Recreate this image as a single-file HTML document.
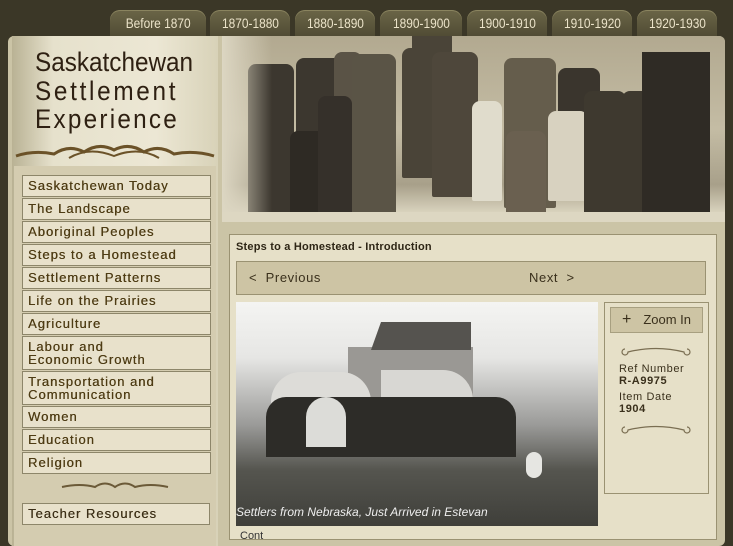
<!DOCTYPE html>
<html><head><meta charset="utf-8"><style>
*{margin:0;padding:0;box-sizing:border-box}
body{width:733px;height:538px;overflow:hidden;background:#3b3727;font-family:"Liberation Sans",sans-serif;position:relative}
.tab{position:absolute;top:10px;height:28px;border-radius:10px 10px 0 0;background:linear-gradient(#6b6547,#4f4a33);color:#ebe3c9;font-size:14px;text-align:center;line-height:26px;box-shadow:inset 0 1px 0 #8a845f}
.tab span{display:inline-block;transform:scaleX(0.85)}
.main{position:absolute;left:8px;top:36px;width:717px;height:510px;background:#cbc4a6;border-radius:6px}
.left{position:absolute;left:12px;top:36px;width:206px;height:510px;background:linear-gradient(90deg,#b9b294,#e6e1cc 20%,#ece7d4 70%,#d8d2b8)}
.title{position:absolute;left:35px;top:48px;color:#2e2012;font-family:"Liberation Sans",sans-serif;font-size:27px;line-height:28.5px;transform:scaleX(0.9);transform-origin:left}
.menubg{position:absolute;left:14px;top:166px;width:202px;height:380px;background:#d4ccb0}
.m{position:absolute;left:22px;width:189px;height:22px;background:#e8e1cb;border:1px solid #8d866a;color:#4e3c14;font-size:13px;letter-spacing:1px;padding-left:5px;line-height:20px;white-space:nowrap;text-shadow:0.3px 0 0 #4e3c14}
.m.two{line-height:13px;padding-top:3px}
.photo{position:absolute;left:222px;top:36px;width:503px;height:186px;background:linear-gradient(180deg,#b2a990 0%,#c4bca4 50%,#a8a08a 80%,#ddd7c2 96%);overflow:hidden;border-radius:0 6px 0 0}
.fig{position:absolute;background:#3c372f;border-radius:8px 8px 2px 2px}
.content{position:absolute;left:229px;top:234px;width:488px;height:306px;background:#e6e0c8;border:1px solid #9a9272}
.nav{position:absolute;left:236px;top:261px;width:470px;height:34px;background:#cdc4a4;border:1px solid #9a9272;color:#3a301c;font-size:13px;letter-spacing:0.6px}
.img{position:absolute;left:236px;top:302px;width:362px;height:224px;background:linear-gradient(180deg,#f4f4f2 0%,#e6e6e4 25%,#9a9a98 55%,#55554f 75%,#3f3f3a 100%);overflow:hidden}
.side{position:absolute;left:604px;top:302px;width:105px;height:192px;border:1px solid #9a9272}
.zoom{position:absolute;left:610px;top:307px;width:93px;height:26px;background:#cdc4a4;border:1px solid #a79f80;color:#3a301c;font-size:13px;line-height:24px}
.swirl{position:absolute;left:619px;width:74px;height:12px}
.lbl{position:absolute;left:619px;font-size:11px;color:#3a301c;letter-spacing:0.6px}
</style></head><body>
<div class="tab" style="left:110px;width:96px"><span>Before 1870</span></div>
<div class="tab" style="left:210px;width:80px"><span>1870-1880</span></div>
<div class="tab" style="left:295px;width:80px"><span>1880-1890</span></div>
<div class="tab" style="left:380px;width:82px"><span>1890-1900</span></div>
<div class="tab" style="left:467px;width:80px"><span>1900-1910</span></div>
<div class="tab" style="left:552px;width:80px"><span>1910-1920</span></div>
<div class="tab" style="left:637px;width:80px"><span>1920-1930</span></div>
<div class="main"></div>
<div class="left"></div>
<div class="title">Saskatchewan<br><span style="letter-spacing:3px">Settlement</span><br><span style="letter-spacing:2.5px">Experience</span></div>
<div class="menubg"></div>
<svg style="position:absolute;left:14px;top:142px" width="202" height="24"><path d="M2 14 Q20 8 40 12 Q55 2 70 10 Q85 0 100 8 Q115 0 130 10 Q145 2 160 12 Q180 8 200 14" stroke="#6b5228" stroke-width="3" fill="none"/><path d="M55 16 Q75 4 100 14 Q125 4 145 16" stroke="#6b5228" stroke-width="2" fill="none"/></svg>
<div class="m" style="top:175px">Saskatchewan Today</div>
<div class="m" style="top:198px">The Landscape</div>
<div class="m" style="top:221px">Aboriginal Peoples</div>
<div class="m" style="top:244px">Steps to a Homestead</div>
<div class="m" style="top:267px">Settlement Patterns</div>
<div class="m" style="top:290px">Life on the Prairies</div>
<div class="m" style="top:313px">Agriculture</div>
<div class="m two" style="top:336px;height:34px">Labour and<br>Economic Growth</div>
<div class="m two" style="top:371px;height:34px">Transportation and<br>Communication</div>
<div class="m" style="top:406px">Women</div>
<div class="m" style="top:429px">Education</div>
<div class="m" style="top:452px">Religion</div>
<svg style="position:absolute;left:60px;top:480px" width="110" height="14"><path d="M2 7 Q20 3 35 7 Q45 0 55 7 Q65 0 75 7 Q90 3 108 7" stroke="#6b5a38" stroke-width="2" fill="none"/></svg>
<div class="m" style="top:503px;width:188px;color:#3a2e18">Teacher Resources</div>
<div class="photo">
<div class="fig" style="left:190px;top:0;width:40px;height:90px;background:#4a4438;border-radius:0"></div>
<div class="fig" style="left:26px;top:28px;width:46px;height:150px"></div>
<div class="fig" style="left:74px;top:22px;width:46px;height:150px"></div>
<div class="fig" style="left:112px;top:16px;width:28px;height:70px;background:#5a5346"></div>
<div class="fig" style="left:68px;top:95px;width:36px;height:85px;background:#2e2a24"></div>
<div class="fig" style="left:96px;top:60px;width:34px;height:120px;background:#35302a"></div>
<div class="fig" style="left:130px;top:18px;width:44px;height:160px;background:#5a5446"></div>
<div class="fig" style="left:180px;top:12px;width:42px;height:130px;background:#4a4438"></div>
<div class="fig" style="left:210px;top:16px;width:46px;height:145px;background:#4e473b"></div>
<div class="fig" style="left:250px;top:65px;width:30px;height:100px;background:#e0dccc"></div>
<div class="fig" style="left:282px;top:22px;width:52px;height:150px;background:#655d4c"></div>
<div class="fig" style="left:336px;top:32px;width:42px;height:110px;background:#3a352d"></div>
<div class="fig" style="left:326px;top:75px;width:40px;height:90px;background:#d8d2c0"></div>
<div class="fig" style="left:284px;top:95px;width:40px;height:85px;background:#6a6050"></div>
<div class="fig" style="left:362px;top:55px;width:42px;height:125px;background:#3e392f"></div>
<div class="fig" style="left:400px;top:55px;width:42px;height:125px;background:#3e392f"></div>
<div class="fig" style="left:420px;top:75px;width:40px;height:100px;background:#4a4438"></div>
<div class="fig" style="left:420px;top:16px;width:68px;height:160px;background:#2f2b25;border-radius:0;z-index:-0"></div>
<div style="position:absolute;left:0;top:0;width:50px;height:186px;background:linear-gradient(90deg,#dcd6c2,rgba(200,196,180,0))"></div>
<div style="position:absolute;left:0;top:176px;width:503px;height:10px;background:#ddd7c2"></div>
</div>
<div class="content"></div>
<div style="position:absolute;left:236px;top:241px;font-size:11px;font-weight:bold;color:#2e2616;letter-spacing:0.2px">Steps to a Homestead - Introduction</div>
<div class="nav"><span style="position:absolute;left:12px;top:8px">&lt;&nbsp; Previous</span><span style="position:absolute;left:292px;top:8px">Next &nbsp;&gt;</span></div>
<div class="img">
<div style="position:absolute;left:112px;top:45px;width:125px;height:70px;background:#9a9894"></div>
<div style="position:absolute;left:135px;top:20px;width:100px;height:28px;background:#55534f;clip-path:polygon(10% 0,100% 0,100% 100%,0 100%)"></div>
<div style="position:absolute;left:35px;top:70px;width:100px;height:45px;background:#dddcd8;border-radius:30px 30px 0 0"></div>
<div style="position:absolute;left:145px;top:68px;width:92px;height:45px;background:#d8d7d3;border-radius:0 30px 0 0"></div>
<div style="position:absolute;left:30px;top:95px;width:250px;height:60px;background:#2d2c28;border-radius:20px 20px 0 0"></div>
<div style="position:absolute;left:70px;top:95px;width:40px;height:50px;background:#dcdcd8;border-radius:20px 20px 0 0"></div>
<div style="position:absolute;left:290px;top:150px;width:16px;height:26px;background:#e6e6e2;border-radius:8px"></div>
<div style="position:absolute;left:0;top:203px;width:362px;height:21px;color:#eee;font-style:italic;font-size:12px">Settlers from Nebraska, Just Arrived in Estevan</div>
</div>
<div class="side"></div>
<div class="zoom"><span style="margin-left:11px;font-size:16px">+</span><span style="margin-left:12px">Zoom In</span></div>
<svg class="swirl" style="top:345px"><path d="M6 4 a3 3 0 1 0 3 3 Q37 0 65 7 a3 3 0 1 0 3 -3" stroke="#7a6e52" stroke-width="1.2" fill="none"/></svg>
<div class="lbl" style="top:363px">Ref Number</div>
<div class="lbl" style="top:375px;font-weight:bold">R-A9975</div>
<div class="lbl" style="top:391px">Item Date</div>
<div class="lbl" style="top:403px;font-weight:bold">1904</div>
<svg class="swirl" style="top:423px"><path d="M6 4 a3 3 0 1 0 3 3 Q37 0 65 7 a3 3 0 1 0 3 -3" stroke="#7a6e52" stroke-width="1.2" fill="none"/></svg>
<div style="position:absolute;left:240px;top:530px;font-size:11px;color:#333">Cont</div>
</body></html>
